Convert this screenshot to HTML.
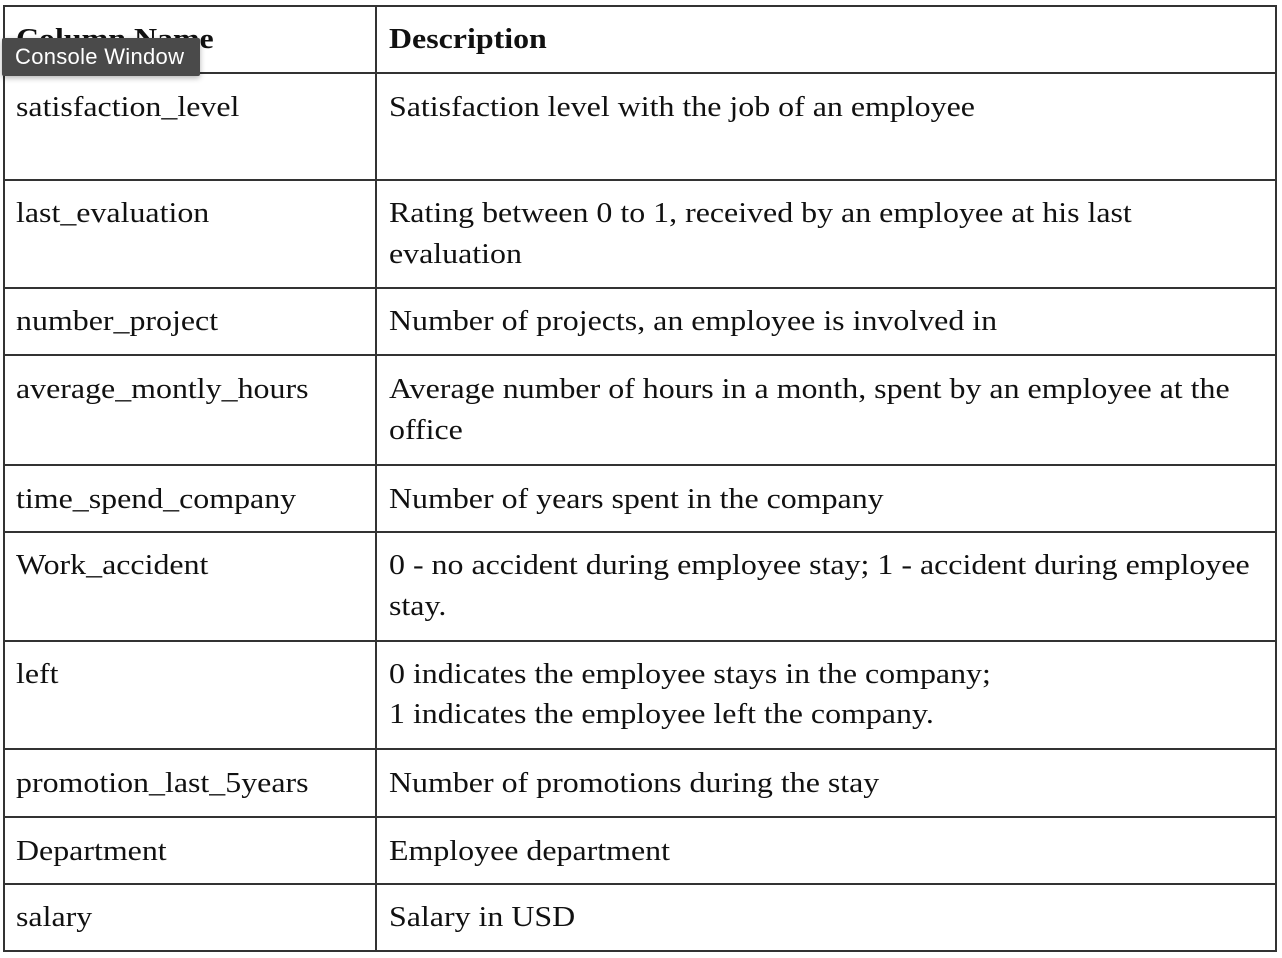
<!DOCTYPE html><html><head><style>
body{margin:0;width:1282px;height:958px;background:#fff;position:relative;overflow:hidden;font-family:"Liberation Serif",serif;color:#111}
.h{position:absolute;left:3px;width:1274px;height:2px;background:#333}
.v{position:absolute;top:5px;height:947px;width:2px;background:#333}
.t{position:absolute;font-size:28px;line-height:41px;white-space:nowrap;transform:scaleX(1.14);transform-origin:0 0}
.b{font-weight:bold}
.tip{position:absolute;left:2px;top:38px;width:198px;height:38px;background:#4a4a4a;color:#fff;font-family:"Liberation Sans",sans-serif;font-size:22px;line-height:38px;padding-left:13px;box-sizing:border-box;box-shadow:0 2px 6px rgba(0,0,0,.3);border-radius:2px;letter-spacing:0.3px}
</style></head><body>
<div class="h" style="top:5px"></div>
<div class="h" style="top:72px"></div>
<div class="h" style="top:179px"></div>
<div class="h" style="top:287px"></div>
<div class="h" style="top:354px"></div>
<div class="h" style="top:464px"></div>
<div class="h" style="top:531px"></div>
<div class="h" style="top:640px"></div>
<div class="h" style="top:748px"></div>
<div class="h" style="top:816px"></div>
<div class="h" style="top:883px"></div>
<div class="h" style="top:950px"></div>
<div class="v" style="left:3px"></div>
<div class="v" style="left:375px"></div>
<div class="v" style="left:1275px"></div>

<div class="t b" style="left:16px;top:19px">Column Name</div>
<div class="t b" style="left:389px;top:19px">Description</div>

<div class="t" style="left:16px;top:87px">satisfaction_level</div>
<div class="t" style="left:389px;top:87px">Satisfaction level with the job of an employee</div>
<div class="t" style="left:16px;top:193px">last_evaluation</div>
<div class="t" style="left:389px;top:193px">Rating between 0 to 1, received by an employee at his last<br>evaluation</div>
<div class="t" style="left:16px;top:301px">number_project</div>
<div class="t" style="left:389px;top:301px">Number of projects, an employee is involved in</div>
<div class="t" style="left:16px;top:369px">average_montly_hours</div>
<div class="t" style="left:389px;top:369px">Average number of hours in a month, spent by an employee at the<br>office</div>
<div class="t" style="left:16px;top:479px">time_spend_company</div>
<div class="t" style="left:389px;top:479px">Number of years spent in the company</div>
<div class="t" style="left:16px;top:545px">Work_accident</div>
<div class="t" style="left:389px;top:545px">0 - no accident during employee stay; 1 - accident during employee<br>stay.</div>
<div class="t" style="left:16px;top:655px;line-height:40px">left</div>
<div class="t" style="left:389px;top:655px;line-height:40px">0 indicates the employee stays in the company;<br>1 indicates the employee left the company.</div>
<div class="t" style="left:16px;top:763px">promotion_last_5years</div>
<div class="t" style="left:389px;top:763px">Number of promotions during the stay</div>
<div class="t" style="left:16px;top:831px">Department</div>
<div class="t" style="left:389px;top:831px">Employee department</div>
<div class="t" style="left:16px;top:897px">salary</div>
<div class="t" style="left:389px;top:897px">Salary in USD</div>

<div class="tip">Console Window</div>
</body></html>
